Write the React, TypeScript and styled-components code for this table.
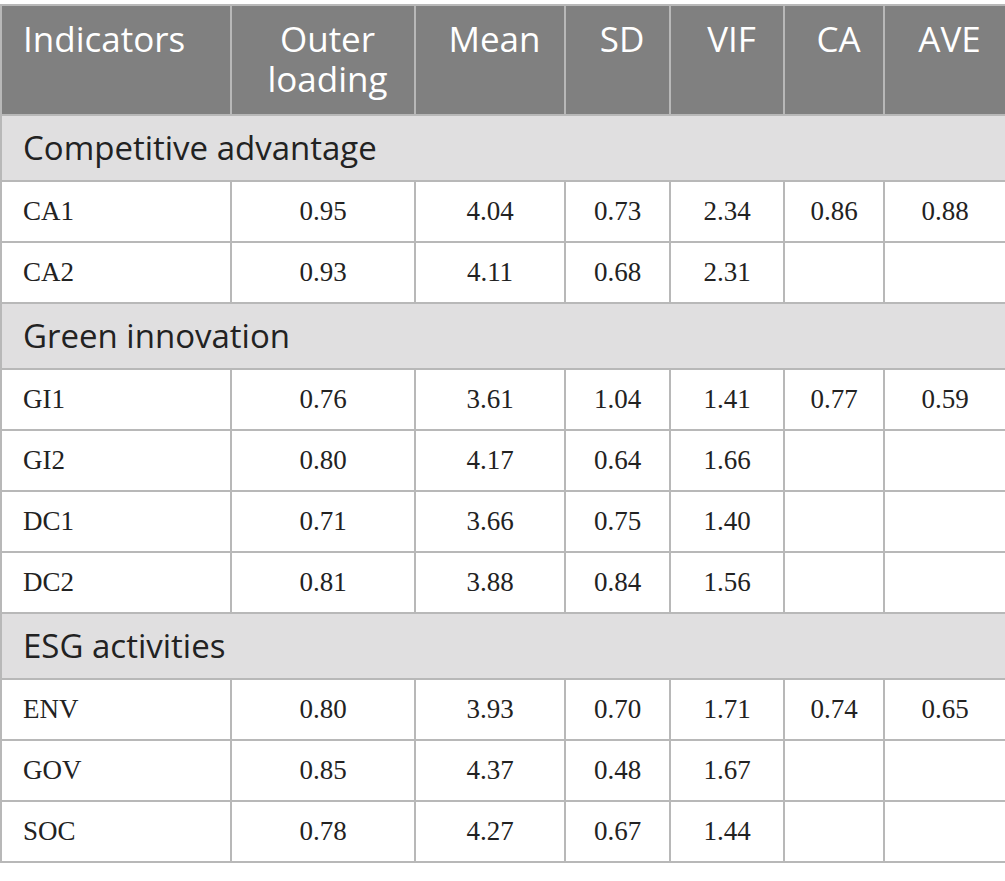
import { createGlobalStyle } from "styled-components";
import styled from "styled-components";

const GlobalStyle = createGlobalStyle`
    body {
        margin: 0;
        background: #ffffff;
    }
`;

const Page = styled.div`
    padding-top: 4px;
`;

const Table = styled.table`
    width: 1005px;
    border-collapse: collapse;
    table-layout: fixed;
`;

const HeadCell = styled.th<{ $align?: string }>`
    background-color: #808080;
    color: #ffffff;
    font-family: "Open Sans", Lato, sans-serif;
    font-weight: 400;
    font-size: 35px;
    line-height: 40px;
    text-align: ${(props) => props.$align || "center"};
    vertical-align: top;
    height: 110px;
    padding: 13px 12px 0 21px;
    border: 2px solid #b8b8b8;
    box-sizing: border-box;
`;

const SectionCell = styled.td`
    background-color: #e0dfe0;
    color: #222222;
    font-family: "Open Sans", Lato, sans-serif;
    font-size: 33px;
    height: 66px;
    padding: 0 21px 2px;
    border: 2px solid #b8b8b8;
    box-sizing: border-box;
`;

const Cell = styled.td<{ $align?: string }>`
    color: #222222;
    font-family: "Liberation Serif", serif;
    font-size: 27px;
    text-align: ${(props) => props.$align || "center"};
    height: 61px;
    padding: 0 21px;
    border: 2px solid #b8b8b8;
    box-sizing: border-box;
`;

const widths = [230, 184, 150, 105, 114, 100, 122];
const headers = ["Indicators", "Outer loading", "Mean", "SD", "VIF", "CA", "AVE"];

interface ISection {
    title: string;
    rows: string[][];
}

const sections: ISection[] = [
    {
        title: "Competitive advantage",
        rows: [
            ["CA1", "0.95", "4.04", "0.73", "2.34", "0.86", "0.88"],
            ["CA2", "0.93", "4.11", "0.68", "2.31", "", ""],
        ],
    },
    {
        title: "Green innovation",
        rows: [
            ["GI1", "0.76", "3.61", "1.04", "1.41", "0.77", "0.59"],
            ["GI2", "0.80", "4.17", "0.64", "1.66", "", ""],
            ["DC1", "0.71", "3.66", "0.75", "1.40", "", ""],
            ["DC2", "0.81", "3.88", "0.84", "1.56", "", ""],
        ],
    },
    {
        title: "ESG activities",
        rows: [
            ["ENV", "0.80", "3.93", "0.70", "1.71", "0.74", "0.65"],
            ["GOV", "0.85", "4.37", "0.48", "1.67", "", ""],
            ["SOC", "0.78", "4.27", "0.67", "1.44", "", ""],
        ],
    },
];

function App() {
    return (
        <Page>
            <GlobalStyle />
            <Table>
                <colgroup>
                    {widths.map((w, i) => (
                        <col key={i} style={{ width: w }} />
                    ))}
                </colgroup>
                <thead>
                    <tr>
                        {headers.map((h, i) => (
                            <HeadCell key={h} $align={i === 0 ? "left" : "center"}>{h}</HeadCell>
                        ))}
                    </tr>
                </thead>
                <tbody>
                    {sections.map((section) => (
                        <>
                            <tr key={section.title}>
                                <SectionCell colSpan={7}>{section.title}</SectionCell>
                            </tr>
                            {section.rows.map((row) => (
                                <tr key={row[0]}>
                                    {row.map((value, i) => (
                                        <Cell key={i} $align={i === 0 ? "left" : "center"}>{value}</Cell>
                                    ))}
                                </tr>
                            ))}
                        </>
                    ))}
                </tbody>
            </Table>
        </Page>
    );
}

export default App;
